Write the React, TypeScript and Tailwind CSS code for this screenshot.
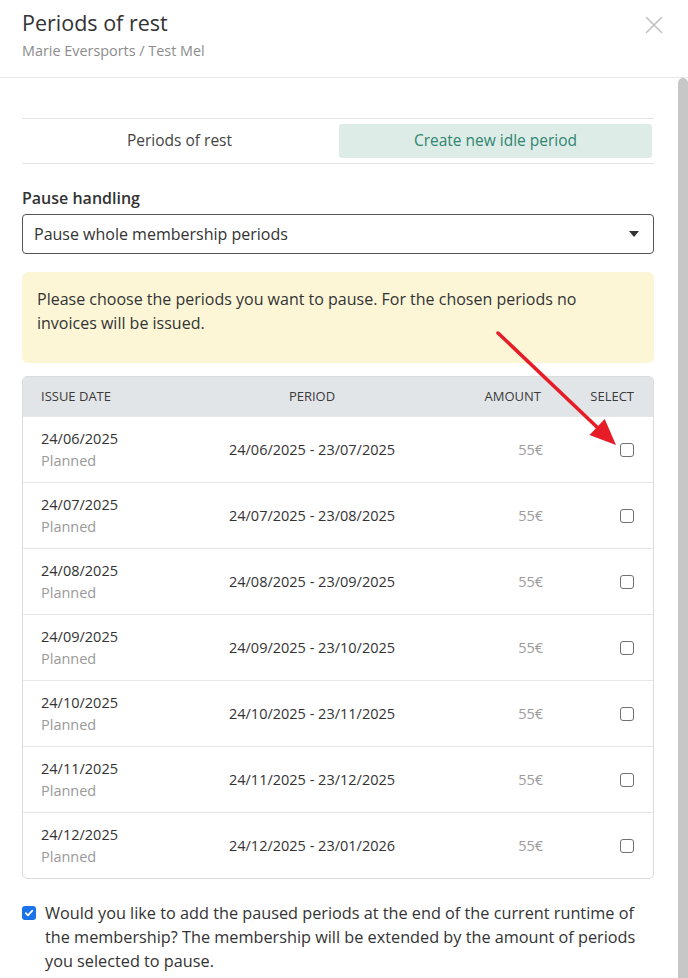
import { Fragment } from "react";

type Row = {
  issueDate: string;
  period: string;
  amount: string;
};

const rows: Row[] = [
  { issueDate: "24/06/2025", period: "24/06/2025 - 23/07/2025", amount: "55€" },
  { issueDate: "24/07/2025", period: "24/07/2025 - 23/08/2025", amount: "55€" },
  { issueDate: "24/08/2025", period: "24/08/2025 - 23/09/2025", amount: "55€" },
  { issueDate: "24/09/2025", period: "24/09/2025 - 23/10/2025", amount: "55€" },
  { issueDate: "24/10/2025", period: "24/10/2025 - 23/11/2025", amount: "55€" },
  { issueDate: "24/11/2025", period: "24/11/2025 - 23/12/2025", amount: "55€" },
  { issueDate: "24/12/2025", period: "24/12/2025 - 23/01/2026", amount: "55€" },
];

const gridCols = "grid grid-cols-[160px_222px_120px_91px] pl-[18px] pr-[19px]";

function EmptyBox() {
  return (
    <span className="block h-[14px] w-[14px] rounded-[3px] border border-[#707070] bg-white" />
  );
}

function CheckedBox() {
  return (
    <span className="flex h-[14px] w-[14px] shrink-0 items-center justify-center rounded-[3px] bg-[#1a73e8]">
      <svg width="10" height="10" viewBox="0 0 10 10" fill="none">
        <path d="M1.8 5.2 4 7.3 8.3 2.6" stroke="white" strokeWidth="1.8" strokeLinecap="round" strokeLinejoin="round" />
      </svg>
    </span>
  );
}

export default function App() {
  return (
    <div className="relative flex h-screen flex-col overflow-hidden bg-white font-['Open_Sans',sans-serif] text-[#333]">
      {/* header */}
      <header className="flex shrink-0 items-start justify-between border-b border-[#e7e7e7] pb-[16px] pl-[22px] pr-[24px] pt-[8px]">
        <div>
          <h1 className="text-[21.5px] leading-[30px] text-[#333]">Periods of rest</h1>
          <p className="mt-[3px] text-[14.4px] leading-[20px] text-[#8c8c8c]">Marie Eversports / Test Mel</p>
        </div>
        <svg className="mt-[8px] mr-[1px]" width="18" height="18" viewBox="0 0 18 18" fill="none">
          <path d="M1.5 1.5 16.5 16.5M16.5 1.5 1.5 16.5" stroke="#c2c2c2" strokeWidth="1.6" strokeLinecap="round" />
        </svg>
      </header>

      <div className="flex min-h-0 flex-1">
        <main className="flex-1 pl-[22px] pr-[24px] pt-[40px]">
          {/* tabs */}
          <div className="grid grid-cols-2 border-y border-[#e3e3e3] py-[5px] pr-[2px]">
            <div className="flex h-[34px] items-center justify-center text-[15.5px] text-[#444]">Periods of rest</div>
            <div className="ml-[2px] flex h-[34px] items-center justify-center rounded-[3px] bg-[#deece8] text-[15.5px] text-[#2f856f]">
              Create new idle period
            </div>
          </div>

          <label className="mt-[22px] block text-[16px] font-semibold leading-[24px] text-[#333]">Pause handling</label>
          <div className="mt-[4px] flex h-[40px] items-center justify-between rounded-[4px] border border-[#555] pl-[11px] pr-[14px] text-[16px]">
            <span>Pause whole membership periods</span>
            <svg width="10" height="6" viewBox="0 0 10 6">
              <path d="M0 0h10L5 6z" fill="#333" />
            </svg>
          </div>

          <div className="mt-[18px] rounded-[6px] bg-[#fcf6d7] px-[15px] pb-[28px] pt-[15px] text-[16px] leading-[24px]">
            Please choose the periods you want to pause. For the chosen periods no invoices will be issued.
          </div>

          {/* table */}
          <div className="mt-[13px] overflow-hidden rounded-[5px] border border-[#dcdcdc]">
            <div className={`${gridCols} h-[39px] items-center bg-[#e2e5e8] text-[13px] uppercase text-[#3a3a3a]`}>
              <span>Issue date</span>
              <span className="text-center">Period</span>
              <span className="pr-[2px] text-right">Amount</span>
              <span className="text-right">Select</span>
            </div>
            {rows.map((row) => (
              <Fragment key={row.issueDate}>
                <div className={`${gridCols} h-[66px] items-center border-t border-[#e6e6e6] text-[14.5px] leading-[22px]`}>
                  <div>
                    <div className="text-[#333]">{row.issueDate}</div>
                    <div className="text-[#9a9a9a]">Planned</div>
                  </div>
                  <span className="text-center">{row.period}</span>
                  <span className="text-right text-[#9a9a9a]">{row.amount}</span>
                  <span className="flex justify-end">
                    <EmptyBox />
                  </span>
                </div>
              </Fragment>
            ))}
          </div>

          <div className="mt-[22px] flex gap-[9px] text-[16.25px] leading-[24px]">
            <span className="pt-[5px]">
              <CheckedBox />
            </span>
            <p>
              Would you like to add the paused periods at the end of the current runtime of the membership? The
              membership will be extended by the amount of periods you selected to pause.
            </p>
          </div>
        </main>
        <div className="w-[10px] shrink-0 rounded-tl-[5px] rounded-tr-[5px] bg-[#c7c7c7]" />
      </div>

      {/* annotation arrow */}
      <svg className="pointer-events-none absolute left-0 top-0" width="688" height="978" viewBox="0 0 688 978">
        <line x1="498" y1="333" x2="599" y2="429" stroke="#e61c26" strokeWidth="3.5" strokeLinecap="round" />
        <path d="M616 445 589.5 435.1 604.7 419.1z" fill="#e61c26" />
      </svg>
    </div>
  );
}
